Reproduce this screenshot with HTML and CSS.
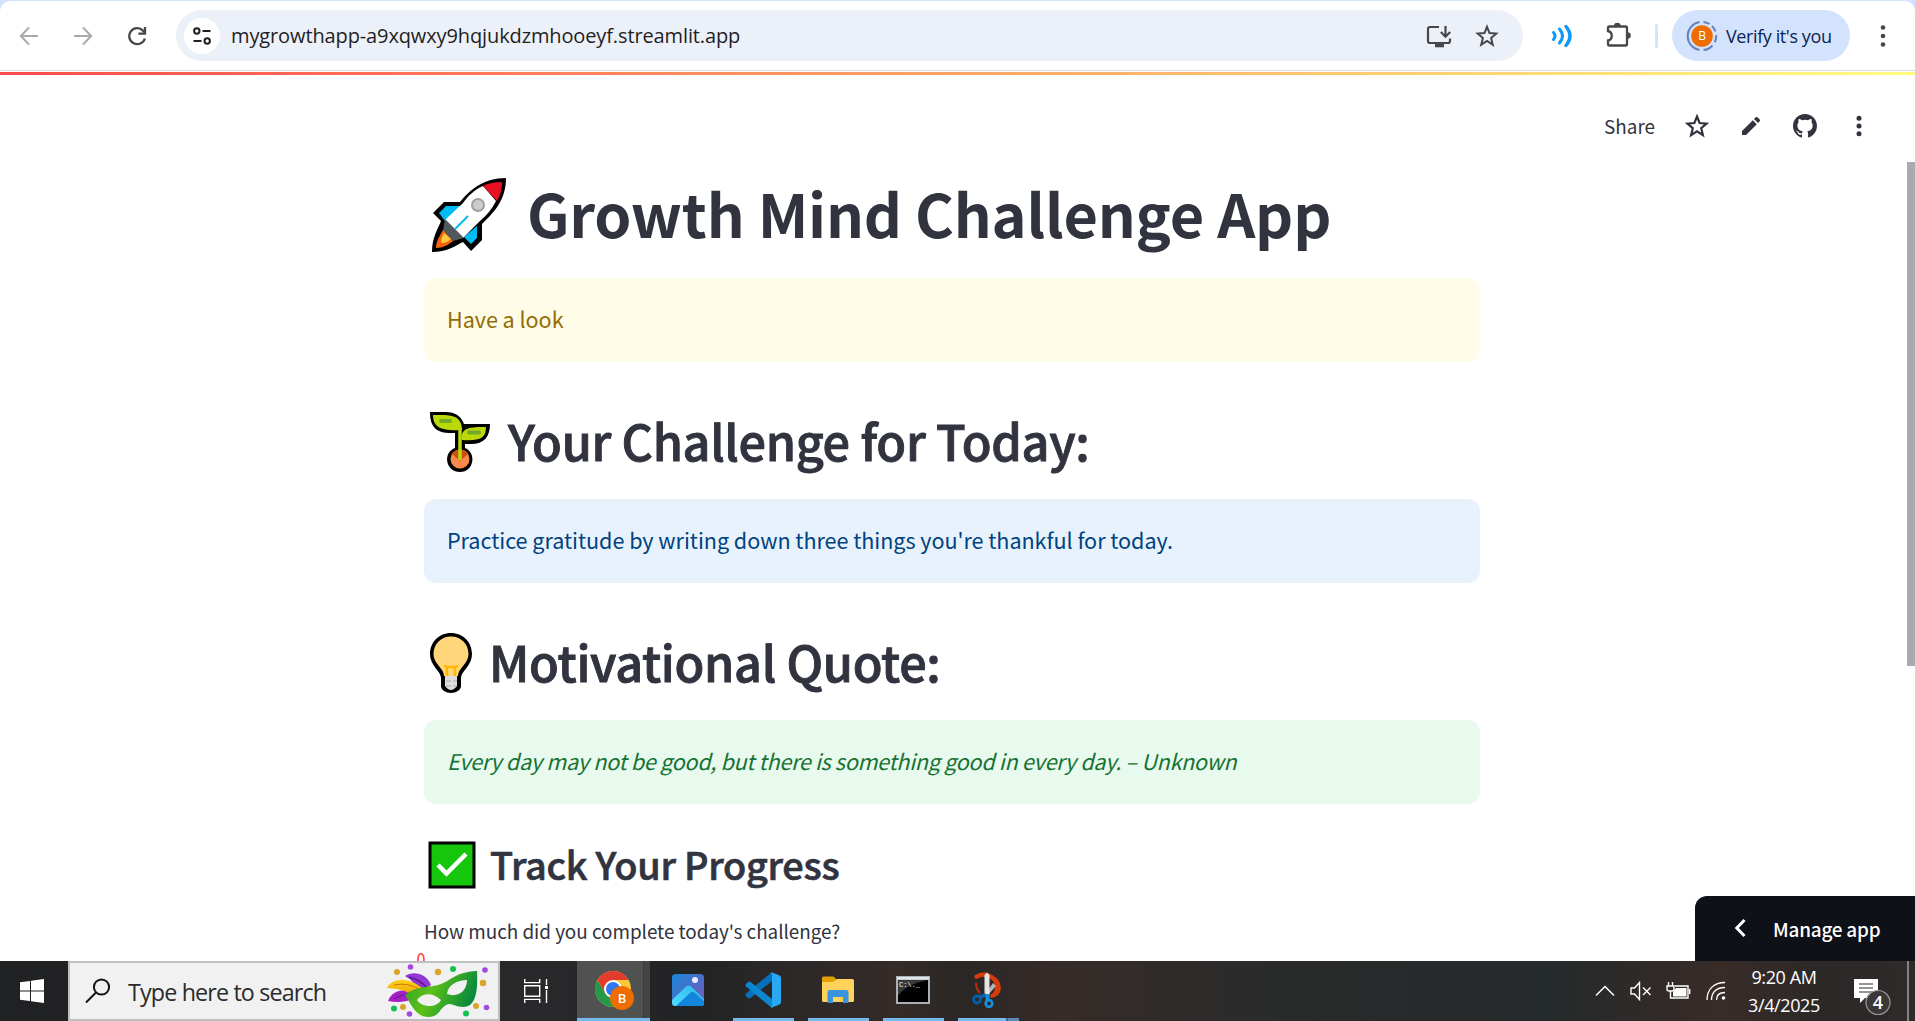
FILE: index.html
```html
<!DOCTYPE html>
<html lang="en">
<head>
<meta charset="utf-8">
<title>Growth Mind Challenge App</title>
<link rel="stylesheet" href="styles.css">
</head>
<body>
<div class="screen">
  <div class="browser">
    <div class="toolbar">
      <div class="nav">
        <svg width="20" height="20" viewBox="0 0 20 20" fill="none" stroke="#a9a9a9" stroke-width="2"><path d="M19 10H2M10 1.5 1.8 10l8.2 8.5"/></svg>
        <svg width="20" height="20" viewBox="0 0 20 20" fill="none" stroke="#a9a9a9" stroke-width="2"><path d="M1 10h17M10 1.5l8.2 8.5-8.2 8.5"/></svg>
        <svg width="20" height="20" viewBox="0 0 20 20" fill="none" stroke="#474747" stroke-width="2.3"><path d="M17.9 12.5A8 8 0 1 1 16 4.6l1.5 1.6"/><path d="M18 1v6.6h-6.6"/></svg>
      </div>
      <div class="omnibox">
        <span class="site"><svg width="20" height="20" viewBox="0 0 20 20" fill="none" stroke="#1f1f1f" stroke-width="2"><circle cx="4.8" cy="5" r="2.7"/><path d="M10.500 5h8M1.500 15h8"/><circle cx="15.200" cy="15" r="2.700"/></svg></span>
        <span class="url">mygrowthapp-a9xqwxy9hqjukdzmhooeyf.streamlit.app</span>
        <svg class="install" width="26" height="24" viewBox="0 0 26 24" fill="none" stroke="#474747" stroke-width="2.200"><path d="M13 3H4Q2 3 2 5v12q0 2 2 2h18q2 0 2-2v-2.500"/><path d="M9 21.300h9" stroke-width="4"/><path d="M19.500 2v10M14.800 8l4.700 4.700L24.200 8"/></svg>
        <svg width="24" height="24" viewBox="0 0 24 24" fill="none" stroke="#474747" stroke-width="2"><path d="M12 2.800l2.500 6.300 6.800.5-5.200 4.400 1.700 6.700-5.800-3.700-5.800 3.700 1.700-6.700L2.700 9.600l6.800-.5z"/></svg>
      </div>
      <svg class="waves" width="22" height="24" viewBox="0 0 22 24" fill="none" stroke="#0f97fb" stroke-width="3" stroke-linecap="round"><path d="M2.500 8.500q3 3.500 0 7M8.500 5q6 7 0 14"/><path d="M15 2.500q8 9.500 0 19" stroke-width="3.400"/></svg>
      <svg class="puzzle" width="26" height="28" viewBox="0 0 26 28"><path d="M3.500 6.500h16q1.500 0 1.500 1.500v16q0 1.500-1.500 1.500h-16q-1.500 0-1.500-1.500v-3.500c5-1 5-8.500 0-9.500V8q0-1.500 1.500-1.500z" fill="none" stroke="#474747" stroke-width="2.300"/><path d="M8 6a3.300 3.300 0 0 1 6.600 0zM21.500 12.300a3.300 3.300 0 0 1 0 6.600z" fill="#474747"/></svg>
      <i class="sep"></i>
      <div class="verify">
        <svg width="32" height="32" viewBox="0 0 32 32"><path d="M13.500 30A14.200 14.200 0 0 1 13.500 2" fill="none" stroke="#6683bd" stroke-width="2"/><path d="M17.500 1.900A14.200 14.200 0 0 1 23.600 4M26 6A14.200 14.200 0 0 1 29.500 11.500M30.200 15A14.200 14.200 0 0 1 28.800 22.200M26.500 25.500A14.200 14.200 0 0 1 17.500 30.100" fill="none" stroke="#6683bd" stroke-width="2"/><circle cx="16" cy="16" r="10.800" fill="#ef6c00"/><text x="16" y="20.200" text-anchor="middle" class="initial">B</text></svg>
        <span>Verify it's you</span>
      </div>
      <svg class="menu" width="6" height="24" viewBox="0 0 6 24" fill="#474747"><circle cx="3" cy="3.500" r="2.300"/><circle cx="3" cy="12" r="2.300"/><circle cx="3" cy="20.500" r="2.300"/></svg>
    </div>
  </div>
  <div class="page">
    <div class="decoration"></div>
    <header class="app-header">
      <span class="share">Share</span>
      <svg width="24" height="24" viewBox="0 0 24 24" fill="none" stroke="#31333f" stroke-width="2.200"><path d="M12 2.500l2.600 6.500 7 .6-5.400 4.600 1.700 6.900-5.900-3.700-5.900 3.700 1.700-6.900L2.400 9.600l7-.6z"/></svg>
      <svg width="20" height="20" viewBox="0 0 20 20" fill="#31333f"><path d="M1 19v-4L11.800 4.200l4 4L5 19zM13 3l1.700-1.700q.9-.7 1.800 0l2.200 2.200q.7.900 0 1.800L17 7z"/></svg>
      <svg width="24" height="24" viewBox="0 0 16 16" fill="#31333f"><path d="M8 0C3.580 0 0 3.580 0 8c0 3.540 2.290 6.530 5.470 7.590.4.070.55-.17.55-.38v-1.490c-2.010.37-2.530-.49-2.690-.94-.09-.23-.48-.94-.82-1.130-.28-.15-.68-.52-.01-.53.63-.01 1.080.58 1.230.82.72 1.210 1.870.87 2.330.66.07-.52.28-.87.51-1.070-1.780-.2-3.640-.89-3.640-3.950 0-.87.31-1.590.82-2.150-.08-.2-.36-1.020.08-2.120 0 0 .67-.21 2.200.82a7.600 7.600 0 0 1 4 0c1.530-1.040 2.200-.82 2.200-.82.44 1.100.16 1.920.08 2.120.51.56.82 1.270.82 2.150 0 3.070-1.870 3.750-3.650 3.950.29.25.54.73.54 1.480v2.200c0 .21.150.46.550.38A8 8 0 0 0 16 8c0-4.420-3.580-8-8-8z"/></svg>
      <svg class="more" width="6" height="22" viewBox="0 0 6 22" fill="#31333f"><circle cx="3" cy="3.200" r="2.500"/><circle cx="3" cy="11" r="2.500"/><circle cx="3" cy="18.800" r="2.500"/></svg>
    </header>
    <main class="content">
      <h1><svg class="rocket" width="76" height="76" viewBox="0 0 76 76"><path d="M75 1C52 1 39 13 29 25H13L2 36l8 8C7 52 1 60 1 75c15 0 23-6 31-10l8 9 11-11V47C62 36 75 24 75 1z" fill="#000"/><path d="M8 36l7-7h15L14 44zM46 49v12l-6 6-7-7z" fill="#00bcf2"/><path d="M52 9C43 13 37 19 32 26L14 43l18 18 17-17c7-6 12-12 16-20z" fill="#fff"/><path d="M71 5c-7 0-14 1.500-19 4l14 15c3-5 5-12 5-19z" fill="#e81123"/><path d="M14 42l19 19-11 3-10-10z" fill="#50585c"/><path d="M12 53C8 60 5 65 5 71c7 0 12-3 17-7z" fill="#f7630c"/><path d="M13 56c-2 4-3 6-3 10 4 0 7-1 10-4z" fill="#ffc83d"/><path d="M24 52l13-13" stroke="#00bcf2" stroke-width="2"/><circle cx="47" cy="28" r="6" fill="#ccc" stroke="#a0a0a0" stroke-width="2"/></svg><span>Growth Mind Challenge App</span></h1>
      <div class="alert warning">Have a look</div>
      <h2><svg class="seedling" width="62" height="62" viewBox="0 0 62 62"><path d="M1 1h16c9 0 15 4 18 12h26c0 13-6 20-19 20h-6v4c12 5 9 24-5 24S13 42 26 37V22C9 23 1 18 1 1z"/><circle cx="31" cy="48" r="9.500" fill="#f7894a"/><path d="M23 43q4-5 8-4 5-1 8 4l-8 7z" fill="#ca5010"/><path d="M4 4c14 0 29-2 29 15C15 20 4 18 4 4zM33 29c-2-13 9-13 24-13 0 12-7 14-24 13z" fill="#bad80a"/><path d="M31 17v32" stroke="#bad80a" stroke-width="3.500"/><path d="M12 10h9M40 21.500h10" stroke="#73aa24" stroke-width="4" stroke-linecap="round"/></svg><span>Your Challenge for Today:</span></h2>
      <div class="alert info">Practice gratitude by writing down three things you're thankful for today.</div>
      <h2><svg class="bulb" width="44" height="62" viewBox="0 0 44 62"><path d="M22 1C10 1 1 10 1 22c0 12 11 17 11 24v8c0 4 5 7 10 7s10-3 10-7v-8c0-7 11-12 11-24C43 10 34 1 22 1z"/><path d="M22 4.500C12 4.500 4.500 12 4.500 22c0 10 10.500 14 10.500 22h14c0-8 10.500-12 10.500-22C39.500 12 32 4.500 22 4.500z" fill="#ffd679"/><path d="M18 44V35q-2 0-2-2M26 44V35q2 0 2-2M17 35h10" fill="none" stroke="#ffb900" stroke-width="2.500"/><path d="M16 44h12v10q-3 4-6 4t-6-4z" fill="#dedede"/><path d="M17 49h5M24 49h4M17 54h5M24 54h4" stroke="#aaa" stroke-width="1.200"/></svg><span>Motivational Quote:</span></h2>
      <div class="alert success"><em>Every day may not be good, but there is something good in every day. – Unknown</em></div>
      <h3><svg width="48" height="48" viewBox="0 0 48 48"><path d="M.5.500h47v47H.5z"/><path d="M3.500 3.500h41v41h-41z" fill="#16c60c"/><path d="M10 24l8.500 8.500L38 13" fill="none" stroke="#fff" stroke-width="4.500"/></svg><span>Track Your Progress</span></h3>
      <p class="question">How much did you complete today's challenge?</p>
      <div class="slider-value">0</div>
    </main>
    <div class="scrollbar"></div>
    <div class="manage"><svg width="12" height="20" viewBox="0 0 12 20" fill="none" stroke="#fff" stroke-width="3"><path d="M10.500 2 2.800 10l7.700 8"/></svg><span>Manage app</span></div>
  </div>
  <footer class="taskbar">
    <div class="start"><svg width="24" height="24" viewBox="0 0 24 24" fill="#fff"><path d="M0 3.300l10-1.400v9.600H0zM11 1.700 24 0v11.500H11zM0 12.500h10v9.500L0 20.700zM11 12.500h13V24l-13-1.800z"/></svg></div>
    <div class="search">
      <svg width="26" height="26" viewBox="0 0 26 26" fill="none" stroke="#111" stroke-width="2"><circle cx="16.500" cy="9" r="7.600"/><path d="M11 14.500 1 24.500"/></svg>
      <span>Type here to search</span>
      <svg class="mask" width="106" height="56" viewBox="0 0 106 56">
        <defs><linearGradient id="mg" x1="0" y1="0" x2="1" y2=".3"><stop offset="0" stop-color="#2f9e2a"/><stop offset=".45" stop-color="#5cc117"/><stop offset="1" stop-color="#0a8a3c"/></linearGradient><linearGradient id="fg" x1="0" y1="0" x2="0" y2="1"><stop offset="0" stop-color="#ffd21c"/><stop offset="1" stop-color="#e79a00"/></linearGradient></defs>
        <path d="M19 13c9-6 22-2 26 9l-12 9q-4-13-14-18z" fill="#9337d4"/><path d="M23 14q12 3 19 12" stroke="#5b1496" fill="none" stroke-width="1.500"/>
        <path d="M2 38q4-11 19-11l8 8q-12 6-27 3z" fill="#a51fc4"/><path d="M8 36q8-5 16-5" stroke="#5b1496" fill="none"/>
        <path d="M1 25c6-11 22-11 36 1l-8 9Q22 26 1 25z" fill="url(#fg)"/><path d="M8 22q15-3 26 5" stroke="#c77d00" fill="none"/>
        <path d="M19 32c11-9 20-7 33-10C64 19 68 9 91 8c1 20-1 36-14 36-9 0-11-5-17-2-6 3-7 12-17 12-14 0-18-14-24-22z" fill="url(#mg)"/>
        <path d="M31 37c7-8 16-7 24 0-5 9-20 7-24 0zM61 31c1-9 10-14 20-14 0 11-9 18-20 14z" fill="#f1f1f1"/>
        <g fill="#d9a528"><circle cx="11" cy="9" r="3"/><circle cx="52" cy="9" r="3.200"/><circle cx="97" cy="20" r="3.200"/><circle cx="90" cy="43" r="3"/><circle cx="17" cy="44" r="3"/></g>
        <g fill="#a348df"><circle cx="24.500" cy="4" r="2.800"/><circle cx="99" cy="7" r="2.800"/><circle cx="100.500" cy="44.500" r="2.800"/><circle cx="23.500" cy="51" r="2.800"/></g>
        <g fill="#14c252"><circle cx="67" cy="6" r="3"/><circle cx="8" cy="45.500" r="3"/><circle cx="80" cy="50.500" r="3"/></g>
      </svg>
    </div>
    <div class="taskview"><svg width="24" height="24" viewBox="0 0 24 24" fill="none" stroke="#fff" stroke-width="1.400"><path d="M.7 0v3.600h15V0M.7 6.700h15v10.600H.7zM.7 24v-3.600h15V24M22.500 0v6M22.500 11v13"/><path d="M21 7h3v3h-3z" fill="#fff" stroke="none"/></svg></div>
    <div class="apps">
      <div class="app active"><svg width="40" height="40" viewBox="0 0 40 40"><circle cx="18" cy="18" r="18" fill="#fbc934"/><path d="M2.400 9A18 18 0 0 1 33.600 9H18z" fill="#e33b2e"/><path d="M2.400 9A18 18 0 0 0 18 36l8-13.500L18 18 10.200 22.500z" fill="#249a49"/><path d="M2.400 9 10.200 22.500 18 9z" fill="#e33b2e"/><circle cx="18" cy="18" r="9" fill="#fff"/><circle cx="18" cy="18" r="7" fill="#2f78ed"/><circle cx="27" cy="27" r="12" fill="#ef6c00"/><text x="27" y="31.500" text-anchor="middle" class="badge-letter">B</text></svg></div>
      <div class="app idle"><svg width="32" height="32" viewBox="0 0 32 32"><defs><linearGradient id="p1" x1="0" y1="0" x2="1" y2="1"><stop offset="0" stop-color="#1687dc"/><stop offset="1" stop-color="#7d55b5"/></linearGradient><linearGradient id="p2" x1="1" y1="0" x2="0" y2="1"><stop offset="0" stop-color="#2bb5ec"/><stop offset="1" stop-color="#4fe0fb"/></linearGradient></defs><rect width="32" height="32" rx="3.500" fill="url(#p1)"/><path d="M0 26 14 12.500q2.500-2 5 0L32 25v3.500q0 3.500-3.500 3.500h-25Q0 32 0 28.500z" fill="url(#p2)"/><path d="M4 32 18 19q2.500-1.800 5 0l9 8v1.500q0 3.500-3.500 3.500z" fill="#1485dc"/><circle cx="23" cy="6" r="3" fill="#e9ecff"/></svg></div>
      <div class="app open"><svg width="36" height="36" viewBox="0 0 36 36"><path d="M1 24l2 2q1.300 1 2.600 0L27 9V0L1 21.500q-1.200 1.200 0 2.500z" fill="#0870b8"/><path d="M1 12l2-2q1.300-1 2.600 0L27 27v9L1 14.500q-1.200-1.200 0-2.500z" fill="#0d86d2"/><path d="M26 0l8.500 3.500Q36 4.300 36 6v24q0 1.700-1.500 2.500L26 36l1-3V3z" fill="#29a8f3"/></svg></div>
      <div class="app open"><svg width="32" height="28" viewBox="0 0 32 28"><path d="M0 2q0-1.500 1.500-1.500h10L15 4v4H0z" fill="#e2a000"/><path d="M0 6h11l4-3h15.500Q32 3 32 4.500v20q0 1.500-1.500 1.500h-29Q0 26 0 24.500z" fill="#ffd35b"/><path d="M5.500 27V16q0-2 2-2h17q2 0 2 2v11h-5.500v-6h-10v6z" fill="#3a94dd"/></svg></div>
      <div class="app open"><svg width="34" height="28" viewBox="0 0 34 28"><path d="M0 0h34v28H0z" fill="#a9b0b8"/><path d="M1 1h32v2.500H1z" fill="#dfe5ea"/><path d="M2 4h30v22H2z" fill="#000"/><path d="M2 4h30Q10 8 2 20z" fill="#383838"/><text x="3" y="11" class="prompt">C:\._</text></svg></div>
      <div class="app split"><svg width="32" height="36" viewBox="0 0 32 36"><path d="M3 3q8-4 13-2 12 4 13 15-1 9-10 10l-1-3q5-2 5-8 0-6-6-9Q10 3 5 7q-4 0-2-4z" fill="#d83b0c"/><path d="M4 11q0 6 4 10" fill="none" stroke="#b8330c" stroke-width="2"/><path d="M21 11l3 3-8 9-2-2z" fill="#b5b5b5"/><path d="M12.500 3l2.500-2.500L17.500 3v20h-5z" fill="#e5e5e5"/><circle cx="5" cy="27.500" r="3.500" fill="none" stroke="#075da8" stroke-width="2.800"/><circle cx="17" cy="31.500" r="3.300" fill="none" stroke="#178fd9" stroke-width="2.800"/><path d="M7.500 25 14 23" stroke="#0860ac" stroke-width="3.500"/><path d="M15.500 22v7" stroke="#178fd9" stroke-width="4"/></svg></div>
    </div>
    <div class="tray">
      <svg class="t-chev" width="20" height="12" viewBox="0 0 20 12" fill="none" stroke="#fff" stroke-width="1.500"><path d="M1 10.500l9-9 9 9"/></svg>
      <svg class="t-vol" width="22" height="20" viewBox="0 0 22 20" fill="none" stroke="#fff" stroke-width="1.400"><path d="M1 7h3.500l5-5.500v17l-5-5.500H1zM13 6.500l7.500 7.500M20.500 6.500 13 14"/></svg>
      <svg class="t-bat" width="25" height="18" viewBox="0 0 25 18" fill="none" stroke="#fff" stroke-width="1.400"><path d="M2.500 0v4M6.500 0v4M1 4h7v3q0 2-2 2H3Q1 9 1 7zM4.500 9v7H22V4H9M23.700 7v5"/><path d="M7 10l3-4h10.500v8.500H7z" fill="#fff" stroke="none"/></svg>
      <svg class="t-wifi" width="20" height="20" viewBox="0 0 20 20" fill="none" stroke="#fff" stroke-width="1.300"><path d="M1 19C1 8 8 1.500 19 1.500M5.500 19c0-8 5-12.500 13.500-12.500M10.500 19c0-5 3-7.500 8.500-7.500"/><circle cx="17.500" cy="17" r="1.800" fill="#fff" stroke="none"/></svg>
      <div class="clock"><span>9:20 AM</span><span>3/4/2025</span></div>
      <svg class="t-note" width="38" height="38" viewBox="0 0 38 38"><path d="M0 1h24v19H11l-5 5v-5H0z" fill="#fff"/><path d="M5 6h14M5 10h14M5 14h14" stroke="#302b29" stroke-width="1.200"/><circle cx="24" cy="24.500" r="12" fill="#3b3737" stroke="#999" stroke-width="1.200"/><text x="24" y="31" text-anchor="middle" class="count">4</text></svg>
      <i class="peek"></i>
    </div>
  </footer>
</div>
</body>
</html>
```
FILE: styles.css
```css
* { box-sizing: border-box; }
body { margin: 0; background: #fff; font-family: "Noto Sans CJK JP", sans-serif; color: #31333f; }
svg { display: block; flex: none; }
.screen { width: 1915px; height: 1021px; overflow: hidden; display: flex; flex-direction: column; }
.browser { height: 72px; background: linear-gradient(#d3e3fd 0 20px, #fff 20px); padding-top: 1px; flex: none; font-family: "Open Sans", sans-serif; }
.toolbar { height: 70px; background: #fff; border-radius: 10px 10px 0 0; border-bottom: 1px solid #dcdde0; display: flex; align-items: center; padding: 0 29px 0 19px; }
.nav { display: flex; gap: 34px; width: 157px; }
.omnibox { width: 1347px; height: 51px; border-radius: 26px; background: #ecf0f9; display: flex; align-items: center; padding: 0 24px 0 8px; }
.site { width: 36px; height: 36px; border-radius: 50%; background: #fff; display: grid; place-items: center; }
.url { margin-left: 11px; font-size: 20px; color: #1f1f1f; flex: 1; letter-spacing: -0.12px; white-space: nowrap; }
.install { margin-right: 23px; }
.waves { margin-left: 28px; }
.puzzle { margin-left: 33px; margin-top: -4px; }
.sep { width: 3px; height: 24px; background: #d3e3fd; border-radius: 2px; margin-left: 23px; }
.verify { margin-left: 14px; width: 178px; height: 51px; border-radius: 26px; background: #d3e3fd; display: flex; align-items: center; padding-left: 14px; gap: 8px; font-size: 18px; color: #0a2351; letter-spacing: -0.4px; white-space: nowrap; }
.initial { font: 12px "Open Sans", sans-serif; fill: #fff; }
.menu { margin-left: auto; }

.page { position: relative; height: 889px; background: #fff; overflow: hidden; flex: none; }
.decoration { height: 3px; background: linear-gradient(90deg, #ff4b4b, #fffd80); }
.app-header { height: 86px; display: flex; justify-content: flex-end; align-items: center; padding: 15px 53px 0 0; gap: 32px; }
.app-header .share { font-size: 18.9px; margin-right: -2px; }
.app-header .more { margin-left: 7px; }
.content { width: 1056px; margin-left: 424px; display: flex; flex-direction: column; }
h1, h2, h3, p { margin: 0; display: flex; white-space: nowrap; }
h1 { height: 117px; font-size: 59.4px; font-weight: 700; line-height: 102px; letter-spacing: -0.22px; }
h1 span { margin-left: 20px; }
.rocket { margin: 16px 0 0 7px; }
h2 { height: 137px; font-size: 48.6px; font-weight: 500; line-height: 157px; letter-spacing: -0.32px; -webkit-text-stroke: 0.9px #31333f; }
h2 svg, h3 svg { -webkit-text-stroke: 0; }
.seedling { margin: 49px 0 0 5px; }
.seedling + span { margin-left: 17px; }
.bulb { margin: 49px 0 0 5px; }
.bulb + span { margin-left: 16px; }
.alert { height: 84px; border-radius: 12px; padding-left: 23px; font-size: 21.6px; line-height: 82px; letter-spacing: -0.05px; white-space: nowrap; }
.warning { background: #fffce7; color: #926c05; }
.info { background: #e8f2fc; color: #004280; }
.success { background: #e8f9ee; color: #177233; letter-spacing: -0.31px; }
h3 { height: 98px; font-size: 37.8px; font-weight: 500; line-height: 120px; letter-spacing: -0.25px; -webkit-text-stroke: 0.7px #31333f; }
h3 svg { margin: 37px 0 0 4px; }
h3 span { margin-left: 14px; }
.question { font-size: 18.9px; line-height: 58px; height: 46px; letter-spacing: -0.04px; }
.slider-value { font-family: "Noto Sans Mono CJK JP", "DejaVu Sans Mono", monospace; font-size: 19px; line-height: 22px; color: #ff4b4b; margin-left: -14px; width: 22px; text-align: center; }
.scrollbar { position: absolute; right: 0; top: 90px; width: 8px; height: 504px; background: #a9a9b0; }
.manage { position: absolute; right: 0; bottom: 0; width: 220px; height: 65px; border-radius: 12px 0 0 0; background: #0e1117; color: #fff; display: flex; align-items: center; padding: 0 0 1px 39px; gap: 27px; font-size: 18.9px; font-weight: 500; letter-spacing: -0.2px; }

.taskbar { height: 60px; flex: none; display: flex; color: #fff; background: linear-gradient(90deg, #202122, #29292b 28%, #222324 36%, #2d2928 42%, #352b28 47%, #2a2726 50%, #362b28 55%, #2a2b2b 66%, #252a2c 81%, #302a28 86%, #382c28 90%, #2c2827 95%, #302a2a); font-family: "Open Sans", sans-serif; }
.start { width: 68px; padding: 18px 20px; }
.search { width: 432px; border: 2px solid #bfbfbf; background: #f1f1f1; color: #2b2b2b; display: flex; align-items: center; padding-left: 15px; font-size: 23.3px; white-space: nowrap; }
.search span { margin-left: 17px; margin-top: 1px; letter-spacing: -0.85px; }
.search .mask { margin-left: auto; margin-right: 6px; }
.taskview { width: 77px; padding: 18px 24px; }
.apps { display: flex; gap: 14px; }
.app { width: 61px; height: 60px; display: grid; place-items: center; border-bottom: 3px solid #76b9ed; padding: 1px 2px 0 0; }
.app.active { width: 73px; background: linear-gradient(90deg, #505252 66px, #383a3a 66px 67px, #444646 67px); justify-items: start; padding: 3px 0 0 18px; }
.app.idle { border-color: transparent; margin-left: -6px; }
.app.split { border-image: linear-gradient(90deg, #76b9ed 47px, #47698a 47px 49px, #5a8cb5 49px) 1; }
.badge-letter { font: 600 13px "Open Sans", sans-serif; fill: #fff; }
.prompt { font: 7px "Liberation Mono", monospace; fill: #fff; }
.tray { margin-left: auto; display: flex; align-items: center; padding-right: 6px; }
.t-vol { margin-left: 15px; }
.t-bat { margin-left: 14px; }
.t-wifi { margin-left: 15px; }
.clock { display: flex; flex-direction: column; width: 76px; margin-left: 20px; text-align: center; font-size: 18px; line-height: 28px; letter-spacing: -0.4px; white-space: nowrap; }
.t-note { margin-left: 32px; margin-top: 12px; }
.count { font: 600 18px "Open Sans", sans-serif; fill: #fff; }
.peek { width: 2px; height: 60px; background: #858282; margin-left: 15px; }
```
